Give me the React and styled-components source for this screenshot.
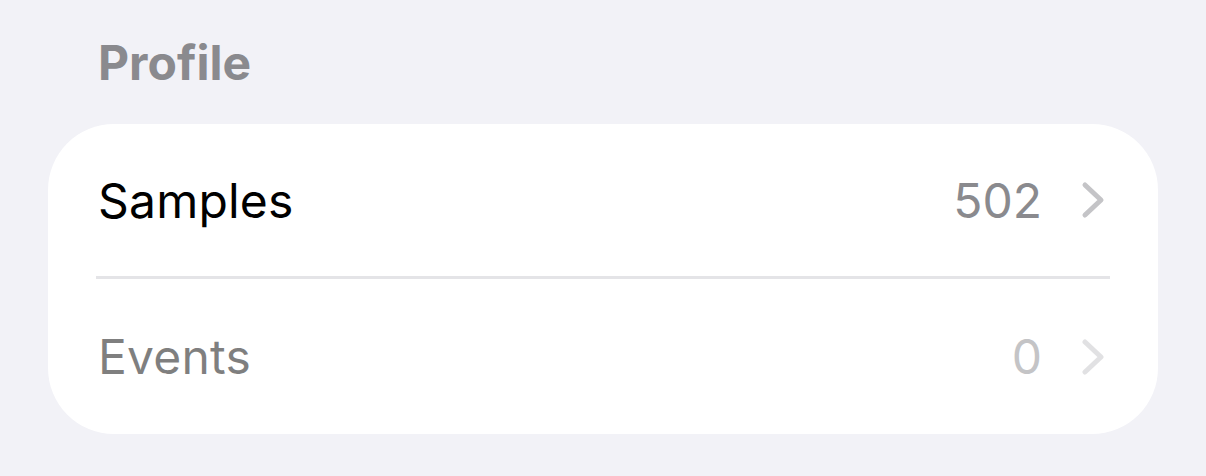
import React from "react";
import styled, { createGlobalStyle } from "styled-components";

const Global = createGlobalStyle`
  html, body { margin: 0; padding: 0; background: #f2f2f7; }
  body { font-family: Inter, "Noto Sans", "Liberation Sans", sans-serif; -webkit-font-smoothing: antialiased; }
`;

const Page = styled.div`
  width: 1206px;
  height: 476px;
  background: #f2f2f7;
  padding-top: 31px;
  box-sizing: border-box;
`;

const SectionHeader = styled.div`
  padding-left: 98px;
  font-size: 48px;
  font-weight: 700;
  line-height: 64px;
  color: #8a8a8e;
  margin-bottom: 29px;
`;

const Card = styled.div`
  margin: 0 48px;
  background: #ffffff;
  border-radius: 66px;
  overflow: hidden;
`;

const Row = styled.div`
  display: flex;
  align-items: center;
  height: ${(p) => p.$h}px;
  padding: 0 53px 0 50px;
  opacity: ${(p) => (p.$disabled ? 0.5 : 1)};
`;

const Label = styled.span`
  flex: 1;
  font-size: 48px;
  color: #000000;
  letter-spacing: 0.2px;
`;

const Value = styled.span`
  font-size: 48px;
  color: #8a8a8e;
  margin-right: 39px;
`;

const Separator = styled.div`
  height: 3px;
  background: #e4e4e7;
  margin: 0 48px;
`;

const Chevron = () => (
  <svg width="24" height="38" viewBox="0 0 24 38" fill="none">
    <polyline
      points="4,4 20,19 4,34"
      stroke="#c4c4c7"
      strokeWidth="5"
      strokeLinecap="round"
      strokeLinejoin="round"
    />
  </svg>
);

export default function App() {
  return (
    <Page>
      <Global />
      <SectionHeader>Profile</SectionHeader>
      <Card>
        <Row $h={152}>
          <Label>Samples</Label>
          <Value>502</Value>
          <Chevron />
        </Row>
        <Separator />
        <Row $h={155} $disabled>
          <Label>Events</Label>
          <Value>0</Value>
          <Chevron />
        </Row>
      </Card>
    </Page>
  );
}
